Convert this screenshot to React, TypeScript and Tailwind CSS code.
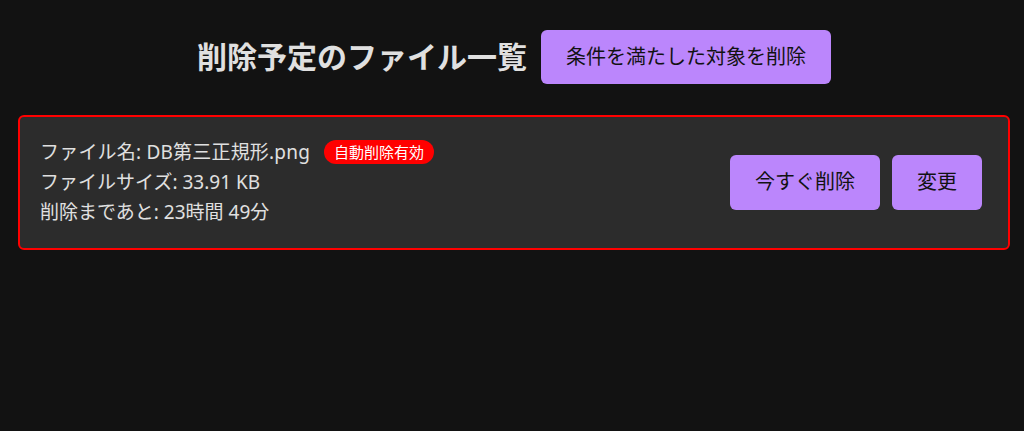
import React from "react";

const FONT = { fontFamily: '"Noto Sans", "Noto Sans CJK JP", sans-serif' };

export default function App() {
  return (
    <div className="min-h-[431px] w-full bg-[#121212] text-[#e0e0e0] pl-[18px] pt-[30px]" style={FONT}>
      {/* Header */}
      <div className="flex w-[992px] items-center justify-center gap-[14px]">
        <h1 className="text-[30px] font-bold leading-none text-[#e0e0e0]">削除予定のファイル一覧</h1>
        <button className="h-[54px] px-[25px] rounded-md bg-[#bb86fc] text-[#121212] text-[20px] leading-none">
          条件を満たした対象を削除
        </button>
      </div>

      {/* File card */}
      <div className="mt-[31px] flex w-[992px] items-center justify-between rounded-md border-2 border-[#ff0000] bg-[#2c2c2c] pl-[20px] pr-[26px] pt-[20px] pb-[21px]">
        <div className="text-[19px] leading-[30px]">
          <div className="flex items-center">
            <span className="tracking-[0.2px]">ファイル名: DB第三正規形.png</span>
            <span className="ml-[14px] rounded-full bg-[#ff0000] px-[10px] text-[15px] leading-[24px] text-white">
              自動削除有効
            </span>
          </div>
          <div>ファイルサイズ: 33.91 KB</div>
          <div>削除まであと: 23時間 49分</div>
        </div>
        <div className="flex items-center gap-[12px]">
          <button className="h-[55px] px-[25px] rounded-md bg-[#bb86fc] text-[#121212] text-[20px] leading-none">
            今すぐ削除
          </button>
          <button className="h-[55px] px-[25px] rounded-md bg-[#bb86fc] text-[#121212] text-[20px] leading-none">
            変更
          </button>
        </div>
      </div>
    </div>
  );
}
